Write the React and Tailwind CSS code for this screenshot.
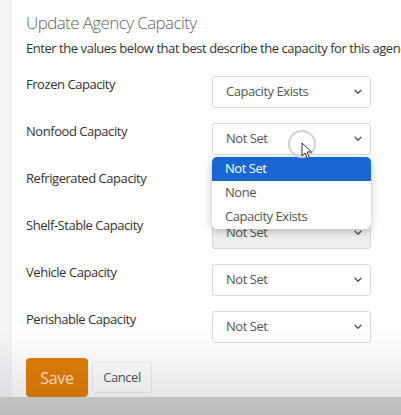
import React from "react";

function Chevron() {
  return (
    <svg width="8" height="6" viewBox="0 0 8 6" className="shrink-0">
      <path d="M1 1.3 L4 4.3 L7 1.3" fill="none" stroke="#555" strokeWidth="1.4" strokeLinecap="round" strokeLinejoin="round" />
    </svg>
  );
}

function Select({ value, disabled, focused, children }) {
  return (
    <div
      className={
        "relative w-[159px] h-[32px] mt-[5px] rounded-[3px] border flex items-center justify-between pl-[13px] pr-[8px] text-[13px] tracking-[-0.45px] text-[#555] " +
        (disabled ? "bg-[#eeeeee] border-[#d6d6d6] " : "bg-white border-[#dcdcdc] ") +
        (focused ? "border-[#cfe3dc]" : "")
      }
    >
      <span>{value}</span>
      <Chevron />
      {children}
    </div>
  );
}

function Row({ label, value, disabled, focused, children }) {
  return (
    <div className="flex items-start h-[47px]">
      <div className="w-[186px] pt-[3px] leading-[20px] text-[13px] tracking-[-0.45px] text-[#333]">{label}</div>
      <Select value={value} disabled={disabled} focused={focused}>
        {children}
      </Select>
    </div>
  );
}

export default function App() {
  return (
    <div
      className="relative w-[401px] h-[415px] overflow-hidden bg-[#f4f5f7] flex flex-col"
      style={{ fontFamily: '"Open Sans", "Noto Sans", sans-serif' }}
    >
      <div className="flex h-[397px]">
        <div className="w-[12px] shrink-0 bg-[#f4f5f7]" />
        <div className="flex-1 bg-white pl-[14px] pt-[11px] overflow-hidden">
          <div className="text-[17px] leading-[24px] font-light tracking-[-0.6px] text-[#666] whitespace-nowrap">Update Agency Capacity</div>
          <div className="mt-[3px] text-[13px] leading-[20px] tracking-[-0.45px] text-[#333] whitespace-nowrap">
            Enter the values below that best describe the capacity for this agency.
          </div>
          <div className="mt-[13px] flex flex-col">
            <Row label="Frozen Capacity" value="Capacity Exists" />
            <Row label="Nonfood Capacity" value="Not Set" focused>
              <div className="absolute left-[-1px] top-[33px] w-[159px] z-20 bg-white rounded-[5px] shadow-[0_2px_8px_rgba(0,0,0,0.25)] overflow-hidden text-[13px]">
                <div className="h-[24px] flex items-center pl-[13px] bg-[#1967d2] text-white">Not Set</div>
                <div className="h-[24px] flex items-center pl-[13px] text-[#555]">None</div>
                <div className="h-[24px] flex items-center pl-[13px] text-[#555]">Capacity Exists</div>
              </div>
              <div className="absolute left-[75px] top-[6px] w-[28px] h-[28px] rounded-full border-[2px] border-[#cfd0e0] z-30" />
              <svg className="absolute left-[88px] top-[18px] z-30" width="12" height="18" viewBox="0 0 12 18">
                <path d="M1 1 L1 14 L4 11 L6.5 16.5 L8.5 15.5 L6 10 L10.5 10 Z" fill="white" stroke="#333" strokeWidth="1" strokeLinejoin="round" />
              </svg>
            </Row>
            <Row label="Refrigerated Capacity" value="Not Set" />
            <Row label="Shelf-Stable Capacity" value="Not Set" disabled />
            <Row label="Vehicle Capacity" value="Not Set" />
            <Row label="Perishable Capacity" value="Not Set" />
          </div>
          <div className="mt-[5px] flex items-center gap-[4px]">
            <button className="w-[62px] h-[39px] rounded-[4px] bg-[#e27f0b] text-[#fde7c8] text-[16px] tracking-[-0.3px]">Save</button>
            <button className="w-[60px] h-[31px] rounded-[3px] border border-[#eeeeee] text-[#555] text-[13px] tracking-[-0.45px]">Cancel</button>
          </div>
        </div>
      </div>
      <div className="flex-1 bg-[#d6d6d6]" />
      <div className="pointer-events-none absolute left-0 right-0 bottom-0 h-[85px] bg-gradient-to-b from-[rgba(0,0,0,0)] to-[rgba(0,0,0,0.12)] z-40" />
    </div>
  );
}
